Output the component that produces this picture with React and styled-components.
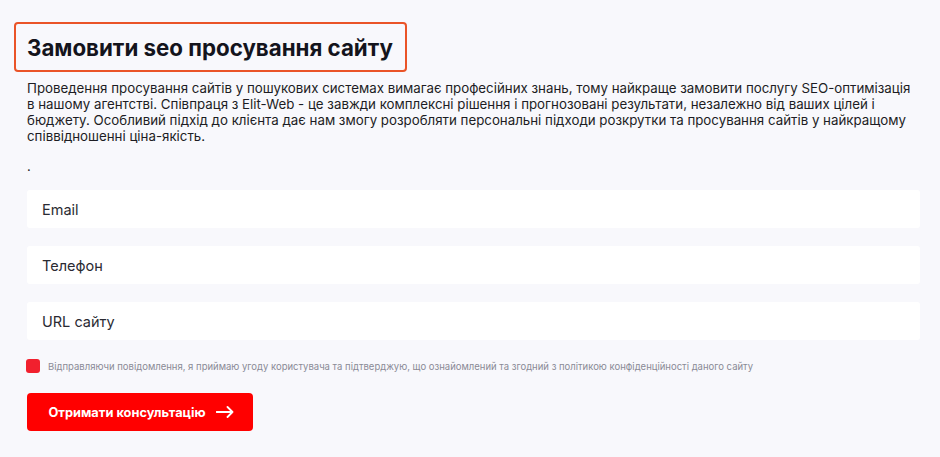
import React, { useState } from "react";
import styled, { createGlobalStyle } from "styled-components";

const GlobalStyle = createGlobalStyle`
  html, body {
    margin: 0;
    padding: 0;
    background: #f8f8fc;
  }
  body {
    font-family: "Inter", "Noto Sans", sans-serif;
    color: #1d1d24;
  }
  * {
    box-sizing: border-box;
  }
`;

function App() {
  const [form, setForm] = useState({ email: "", phone: "", url: "" });
  const [agree, setAgree] = useState(true);

  const handleChange = (e) => {
    const { name, value } = e.target;
    setForm((prev) => ({ ...prev, [name]: value }));
  };

  return (
    <Wrapper>
      <GlobalStyle />
      <TitleBox>
        <Title>Замовити seo просування сайту</Title>
      </TitleBox>
      <Text>
        Проведення просування сайтів у пошукових системах вимагає професійних
        знань, тому найкраще замовити послугу SEO-оптимізація в нашому
        агентстві. Співпраця з Elit-Web - це завжди комплексні рішення і
        прогнозовані результати, незалежно від ваших цілей і бюджету.
        Особливий підхід до клієнта дає нам змогу розробляти персональні
        підходи розкрутки та просування сайтів у найкращому співвідношенні
        ціна-якість.
      </Text>
      <Dot>.</Dot>
      <Form onSubmit={(e) => e.preventDefault()}>
        <Field
          type="email"
          name="email"
          value={form.email}
          onChange={handleChange}
          placeholder="Email"
        />
        <Field
          type="tel"
          name="phone"
          value={form.phone}
          onChange={handleChange}
          placeholder="Телефон"
        />
        <Field
          type="text"
          name="url"
          value={form.url}
          onChange={handleChange}
          placeholder="URL сайту"
        />
        <Agreement>
          <Check
            type="button"
            $checked={agree}
            onClick={() => setAgree(!agree)}
            aria-label="agree"
          />
          <span>
            Відправляючи повідомлення, я приймаю угоду користувача та
            підтверджую, що ознайомлений та згодний з політикою
            конфіденційності даного сайту
          </span>
        </Agreement>
        <Btn type="submit">
          Отримати консультацію
          <svg width="18" height="12" viewBox="0 0 18 12" fill="none">
            <path
              d="M0.5 6H16.5M11.5 1L16.5 6L11.5 11"
              stroke="white"
              strokeWidth="1.8"
              strokeLinecap="round"
              strokeLinejoin="round"
            />
          </svg>
        </Btn>
      </Form>
    </Wrapper>
  );
}

export default App;

const Wrapper = styled.div`
  display: flex;
  flex-direction: column;
  align-items: flex-start;
  padding: 22px 20px 20px 27px;
  width: 940px;
  min-height: 457px;
`;

const TitleBox = styled.div`
  margin-left: -13px;
  padding: 10px 12px 9px 11px;
  border: 2px solid #ea5428;
  border-radius: 4px;
`;

const Title = styled.h1`
  margin: 0;
  font-size: 22.3px;
  line-height: 27px;
  font-weight: 700;
  color: #14141c;
`;

const Text = styled.p`
  margin: 8px 0 0;
  font-size: 13.3px;
  line-height: 16px;
  color: #1d1d24;
  max-width: 890px;
`;

const Dot = styled.p`
  margin: 14px 0 0;
  font-size: 13px;
  line-height: 16px;
`;

const Form = styled.form`
  display: flex;
  flex-direction: column;
  align-self: stretch;
  margin-top: 16px;
  gap: 18px;
`;

const Field = styled.input`
  width: 100%;
  height: 38px;
  padding: 0 15px;
  border: none;
  border-radius: 3px;
  background: #ffffff;
  font-family: "Inter", "Noto Sans", sans-serif;
  font-size: 14.5px;
  color: #1d1d24;
  outline: none;
  &::placeholder {
    color: #2a2a32;
  }
`;

const Agreement = styled.label`
  display: flex;
  align-items: center;
  gap: 8px;
  margin: 1px 0 0 -1px;
  font-size: 9.5px;
  color: #8a8a96;
`;

const Check = styled.button`
  flex: none;
  width: 14px;
  height: 14px;
  padding: 0;
  border: none;
  border-radius: 3px;
  background: ${({ $checked }) => ($checked ? "#f1202e" : "#ffffff")};
  cursor: pointer;
`;

const Btn = styled.button`
  display: flex;
  align-items: center;
  justify-content: center;
  gap: 10px;
  width: 226px;
  height: 38px;
  margin-top: 2px;
  padding-left: 8px;
  border: none;
  border-radius: 4px;
  background: #ff0000;
  color: #ffffff;
  font-family: "Inter", "Noto Sans", sans-serif;
  font-size: 12.8px;
  font-weight: 700;
  cursor: pointer;
`;
